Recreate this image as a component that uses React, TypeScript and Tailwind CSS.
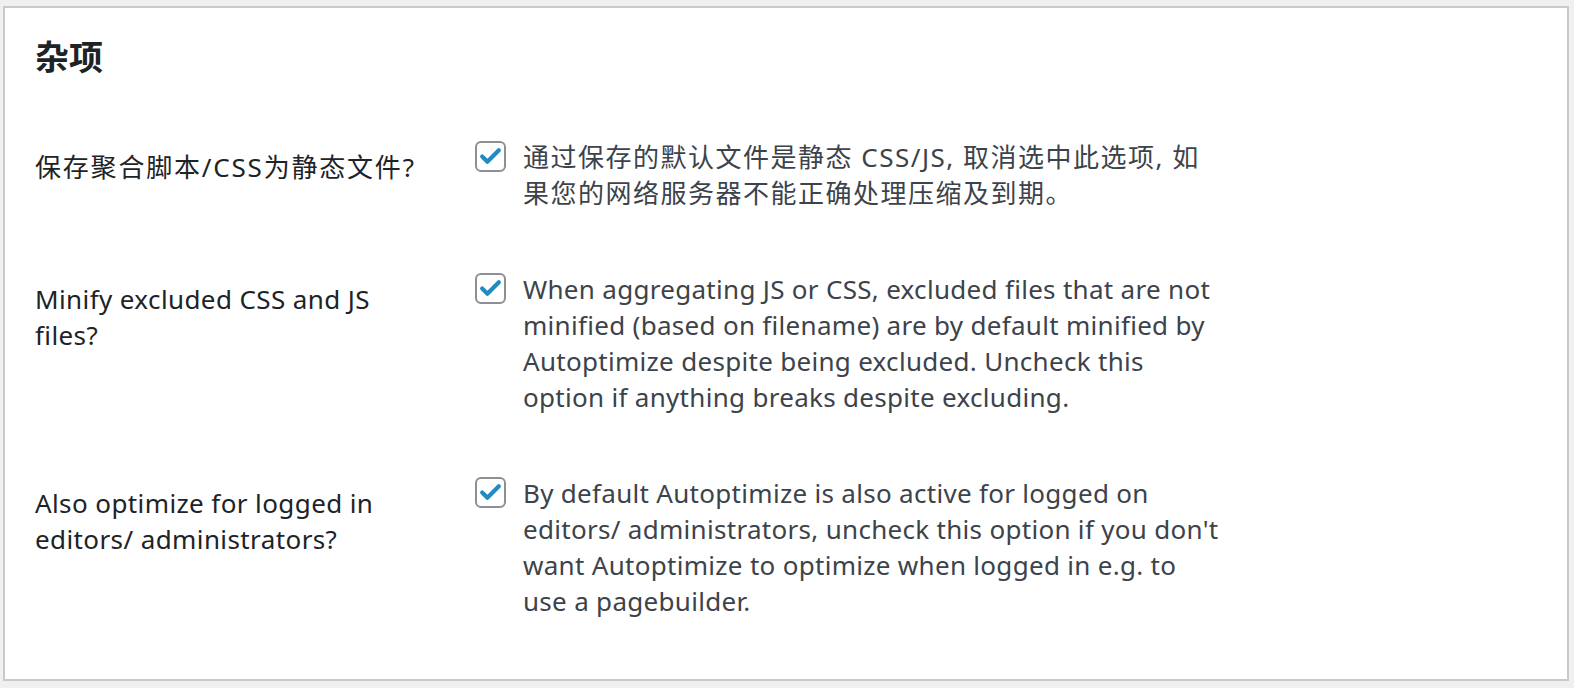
import { Check } from "lucide-react";

const rows = [
  {
    cjk: true,
    label: ["保存聚合脚本/CSS为静态文件?"],
    desc: [
      "通过保存的默认文件是静态 CSS/JS, 取消选中此选项, 如",
      "果您的网络服务器不能正确处理压缩及到期。",
    ],
  },
  {
    cjk: false,
    label: ["Minify excluded CSS and JS", "files?"],
    desc: [
      "When aggregating JS or CSS, excluded files that are not",
      "minified (based on filename) are by default minified by",
      "Autoptimize despite being excluded. Uncheck this",
      "option if anything breaks despite excluding.",
    ],
  },
  {
    cjk: false,
    label: ["Also optimize for logged in", "editors/ administrators?"],
    desc: [
      "By default Autoptimize is also active for logged on",
      "editors/ administrators, uncheck this option if you don't",
      "want Autoptimize to optimize when logged in e.g. to",
      "use a pagebuilder.",
    ],
  },
];

function Checkbox() {
  return (
    <div className="mt-[2px] flex h-[31px] w-[31px] shrink-0 items-center justify-center rounded-[6px] border-2 border-[#8c8f94] bg-white">
      <Check className="h-[25px] w-[25px] text-[#1e8cbe]" strokeWidth={4} />
    </div>
  );
}

export default function App() {
  return (
    <div
      className="bg-[#f0f0f1] pt-[6px] pb-[7px] pl-[3px] pr-[5px]"
      style={{ fontFamily: '"Noto Sans", "Noto Sans CJK SC", sans-serif' }}
    >
      <div className="h-[675px] border-2 border-[#c8c9cc] bg-white pl-[30px]">
        <h2 className="mt-[29px] text-[34px] font-bold leading-[40px] text-[#1d2327]">杂项</h2>
        <div className="mt-[62px] flex flex-col gap-[60px]">
          {rows.map((row, i) => (
            <div key={i} className="flex text-[26px] leading-[36px]">
              <div className={`w-[440px] shrink-0 pt-[10px] text-[#1d2327] ${row.cjk ? "tracking-[1.8px]" : "tracking-[0.4px]"}`}>
                {row.label.map((l, j) => (
                  <div key={j}>{l}</div>
                ))}
              </div>
              <Checkbox />
              <div className={`ml-[17px] text-[#3c434a] ${row.cjk ? "tracking-[1.5px]" : "tracking-[0.3px]"}`}>
                {row.desc.map((l, j) => (
                  <div key={j} className="whitespace-nowrap">{l}</div>
                ))}
              </div>
            </div>
          ))}
        </div>
      </div>
    </div>
  );
}
